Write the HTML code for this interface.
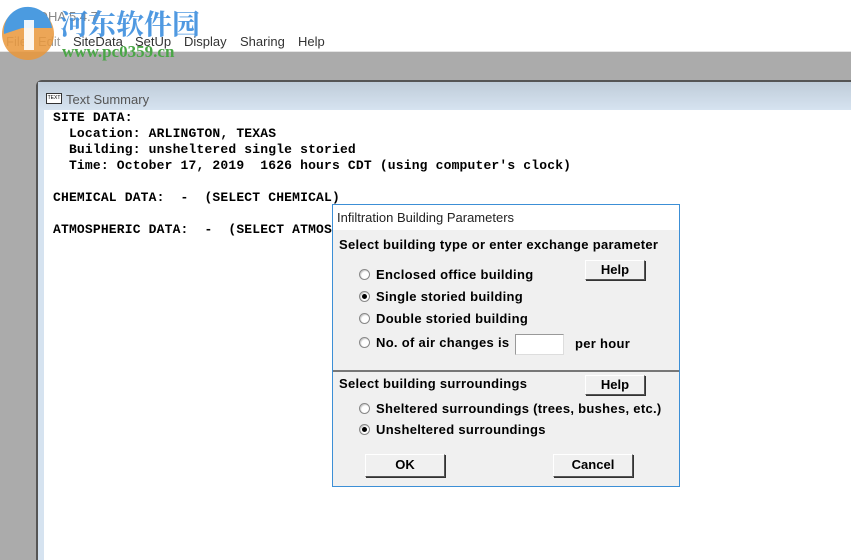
<!DOCTYPE html>
<html><head><meta charset="utf-8"><style>
*{margin:0;padding:0;box-sizing:border-box}
html,body{width:851px;height:560px;overflow:hidden}
body{background:#ababab;position:relative;font-family:"Liberation Sans",sans-serif}
.abs{position:absolute}
#top{left:0;top:0;width:851px;height:52px;background:#fff;border-bottom:1px solid #e4e4e4}
.menu{top:34px;font-size:13px;color:#333}
#frame{left:36px;top:80px;width:815px;height:480px;background:#d6e3f0;border-left:2px solid #555;border-top:2px solid #555;border-radius:6px 0 0 0}
#tbar{left:38px;top:82px;width:813px;height:28px;background:linear-gradient(#bfccd9,#d6e3f0)}
#content{left:44px;top:110px;width:807px;height:450px;background:#fff}
pre{position:absolute;left:53px;top:110px;font:bold 13px/16px "Liberation Mono",monospace;letter-spacing:0.17px;color:#000}
#dlg{left:332px;top:204px;width:348px;height:283px;background:#f0f0f0;border:1px solid #3c8fd6}
#dt{left:0;top:0;width:346px;height:25px;background:#fff;font-size:13px;color:#222;padding:5px 0 0 4px}
.b{font-weight:bold;font-size:13px;letter-spacing:0.3px;color:#000;position:absolute;white-space:nowrap}
.r{position:absolute;width:11px;height:11px;border-radius:50%;background:#fff;border:1px solid #888;box-shadow:inset 1px 1px 1px #ccc}
.r.on::after{content:"";position:absolute;left:2px;top:2px;width:5px;height:5px;border-radius:50%;background:#000}
.btn{position:absolute;background:#f0f0f0;border:1px solid;border-color:#fff #555 #555 #fff;box-shadow:1px 1px 0 #333;font-weight:bold;font-size:13px;text-align:center}
</style></head><body>
<div id="top" class="abs"></div>
<div class="abs" style="left:22px;top:9px;font-size:13px;color:#888">ALOHA 5.4.7</div>
<div class="abs menu" style="left:6px;color:#999">File</div>
<div class="abs menu" style="left:38px;color:#999">Edit</div>
<div class="abs menu" style="left:73px">SiteData</div>
<div class="abs menu" style="left:135px">SetUp</div>
<div class="abs menu" style="left:184px">Display</div>
<div class="abs menu" style="left:240px">Sharing</div>
<div class="abs menu" style="left:298px">Help</div>
<svg class="abs" style="left:0;top:4px" width="60" height="58"><circle cx="28" cy="30" r="26" fill="#e9973a" opacity=".85"/><path d="M4 30a24 24 0 0 1 48-6H22z" fill="#4b9be0"/><path d="M24 16h10v30H24z" fill="#fff" opacity=".9"/></svg>
<div class="abs" style="left:60px;top:6px;font:bold 28px 'Noto Serif CJK SC','Noto Sans CJK SC',sans-serif;color:#3d8ede;opacity:.9;line-height:34px">河东软件园</div>
<div class="abs" style="left:62px;top:42px;font:bold 17px 'Liberation Serif',serif;color:#4aa646">www.pc0359.cn</div>
<div id="frame" class="abs"></div>
<div id="tbar" class="abs"></div>
<div class="abs" style="left:46px;top:93px;width:16px;height:11px;border:1px solid #333;background:#fff;font-size:5px;text-align:center;line-height:9px">TEXT</div>
<div class="abs" style="left:66px;top:92px;font-size:13px;color:#555">Text Summary</div>
<div id="content" class="abs"></div>
<pre>SITE DATA:
  Location: ARLINGTON, TEXAS
  Building: unsheltered single storied
  Time: October 17, 2019  1626 hours CDT (using computer's clock)

CHEMICAL DATA:  -  (SELECT CHEMICAL)

ATMOSPHERIC DATA:  -  (SELECT ATMOS</pre>
<div id="dlg" class="abs">
<div id="dt" class="abs">Infiltration Building Parameters</div>
<div class="b" style="left:6px;top:32px">Select building type or enter exchange parameter</div>
<div class="r" style="left:26px;top:64px"></div><div class="b" style="left:43px;top:62px">Enclosed office building</div>
<div class="r on" style="left:26px;top:86px"></div><div class="b" style="left:43px;top:84px">Single storied building</div>
<div class="r" style="left:26px;top:108px"></div><div class="b" style="left:43px;top:106px">Double storied building</div>
<div class="r" style="left:26px;top:132px"></div><div class="b" style="left:43px;top:130px">No. of air changes is</div>
<div class="abs" style="left:182px;top:129px;width:49px;height:21px;background:#fff;border:1px solid #999;border-right-color:#ddd;border-bottom-color:#ddd"></div>
<div class="b" style="left:242px;top:131px">per hour</div>
<div class="btn" style="left:252px;top:55px;width:60px;height:20px;line-height:17px">Help</div>
<div class="abs" style="left:0;top:165px;width:346px;height:2px;background:#777"></div>
<div class="b" style="left:6px;top:171px">Select building surroundings</div>
<div class="btn" style="left:252px;top:170px;width:60px;height:20px;line-height:17px">Help</div>
<div class="r" style="left:26px;top:198px"></div><div class="b" style="left:43px;top:196px">Sheltered surroundings (trees, bushes, etc.)</div>
<div class="r on" style="left:26px;top:219px"></div><div class="b" style="left:43px;top:217px">Unsheltered surroundings</div>
<div class="btn" style="left:32px;top:249px;width:80px;height:23px;line-height:20px">OK</div>
<div class="btn" style="left:220px;top:249px;width:80px;height:23px;line-height:20px">Cancel</div>
</div>
</body></html>
